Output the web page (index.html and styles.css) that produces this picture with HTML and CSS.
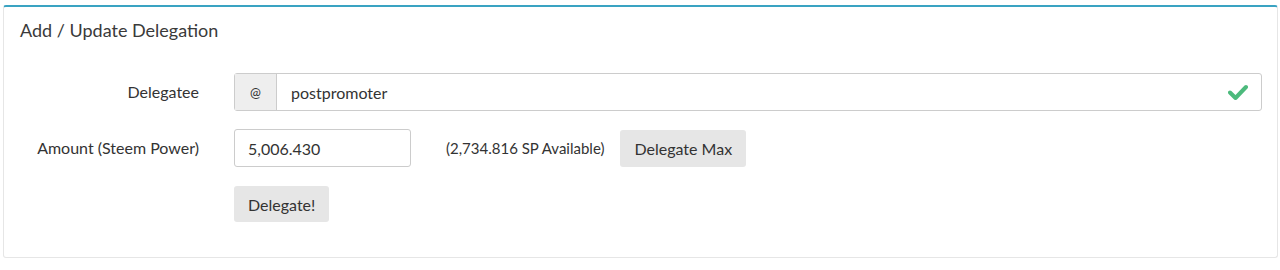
FILE: index.html
```html
<!DOCTYPE html>
<html lang="en">

<head>
    <meta charset="UTF-8">
    <meta name="viewport" content="width=device-width, initial-scale=1.0">
    <title>Add / Update Delegation</title>
    <link rel="stylesheet" href="styles.css">
</head>

<body>
    <div class="panel">
        <h2 class="panel-title">Add / Update Delegation</h2>

        <form class="delegate-form" onsubmit="return false">
            <label class="field-label" for="delegatee">Delegatee</label>
            <div class="input-group">
                <span class="addon">@</span>
                <input type="text" id="delegatee" value="postpromoter">
                <svg class="check" width="20" height="16" viewBox="0 0 20 16">
                    <path d="M2 8.5 L7.5 14 L18 3" fill="none" stroke="#4cba7c" stroke-width="4" stroke-linecap="round" stroke-linejoin="round"/>
                </svg>
            </div>

            <label class="field-label" for="amount">Amount (Steem Power)</label>
            <div class="amount-row">
                <input type="text" id="amount" class="amount-input" value="5,006.430">
                <span class="available">(2,734.816 SP Available)</span>
                <button type="button" class="btn">Delegate Max</button>
            </div>

            <span></span>
            <div>
                <button type="submit" class="btn btn-submit">Delegate!</button>
            </div>
        </form>
    </div>
</body>

</html>
```

FILE: styles.css
```css
body {
    margin: 0;
    font-family: 'Lato', 'Noto Sans', sans-serif;
    color: #333;
    background: #fff;
}

.panel {
    margin: 5px 2px 0 3px;
    height: 253px;
    box-sizing: border-box;
    border: 1px solid #e6e6e6;
    border-top: 2px solid #3aa3c2;
    border-radius: 3px;
}

.panel-title {
    margin: 0;
    padding: 12px 16px 0;
    font-size: 18px;
    font-weight: 400;
    line-height: 22px;
    color: #3a3a3a;
}

.delegate-form {
    display: grid;
    grid-template-columns: 230px 1fr;
    row-gap: 18px;
    margin-top: 32px;
    padding-right: 15px;
}

.field-label {
    text-align: right;
    padding-right: 35px;
    font-size: 16px;
    line-height: 38px;
}

.input-group {
    display: flex;
    align-items: center;
    height: 38px;
    box-sizing: border-box;
    border: 1px solid #ccc;
    border-radius: 3px;
}

.addon {
    width: 41px;
    height: 100%;
    display: flex;
    align-items: center;
    justify-content: center;
    background: #eee;
    border-right: 1px solid #ccc;
    font-size: 13px;
}

.input-group input {
    flex: 1;
    border: none;
    outline: none;
    padding: 0 14px;
    height: 100%;
    font-family: inherit;
    font-size: 16px;
    color: #333;
    background: transparent;
}

.check {
    margin-right: 13px;
}

.amount-row {
    display: flex;
    align-items: center;
}

.amount-input {
    width: 177px;
    height: 38px;
    box-sizing: border-box;
    border: 1px solid #ccc;
    border-radius: 3px;
    padding: 0 13px;
    font-family: inherit;
    font-size: 16px;
    color: #333;
}

.available {
    margin-left: 35px;
    margin-right: 16px;
    font-size: 15px;
}

.btn {
    height: 37px;
    padding: 0 14px;
    border: none;
    border-radius: 3px;
    background: #e6e6e6;
    font-family: inherit;
    font-size: 16px;
    color: #333;
    cursor: pointer;
}

.btn-submit {
    height: 36px;
    margin-top: 1px;
}
```
